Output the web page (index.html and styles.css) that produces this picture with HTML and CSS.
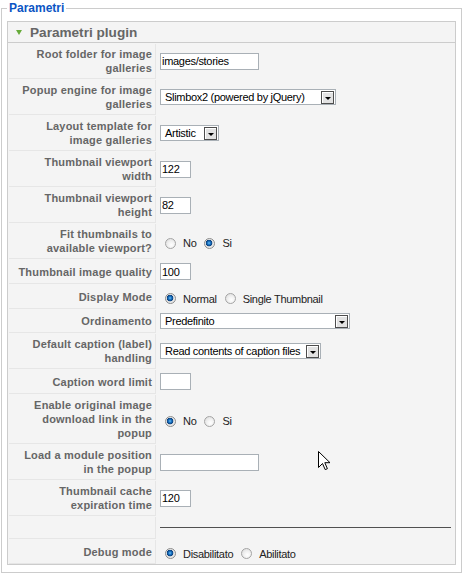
FILE: index.html
```html
<!DOCTYPE html>
<html lang="it">
<head>
<meta charset="utf-8">
<title>Parametri</title>
<link rel="stylesheet" href="styles.css">
</head>
<body>
<fieldset class="adminform">
  <legend>Parametri</legend>
  <div class="panel">
    <h3 class="panel-title"><span class="toggle"></span>Parametri plugin</h3>
    <table class="paramlist">
      <tr>
        <td class="key">Root folder for image<br>galleries</td>
        <td class="val"><input class="text w-wide" type="text" value="images/stories"></td>
      </tr>
      <tr>
        <td class="key">Popup engine for image<br>galleries</td>
        <td class="val"><span class="select w-slimbox"><span class="sel-text">Slimbox2 (powered by jQuery)</span><span class="sel-btn"></span></span></td>
      </tr>
      <tr>
        <td class="key">Layout template for<br>image galleries</td>
        <td class="val"><span class="select w-artistic"><span class="sel-text">Artistic</span><span class="sel-btn"></span></span></td>
      </tr>
      <tr>
        <td class="key">Thumbnail viewport<br>width</td>
        <td class="val"><input class="text w-small" type="text" value="122"></td>
      </tr>
      <tr>
        <td class="key">Thumbnail viewport<br>height</td>
        <td class="val"><input class="text w-small" type="text" value="82"></td>
      </tr>
      <tr>
        <td class="key">Fit thumbnails to<br>available viewport?</td>
        <td class="val">
          <div class="radios">
            <input class="radio" type="radio" name="fit"><span class="opt">No</span>
            <input class="radio" type="radio" name="fit" checked><span class="opt">Si</span>
          </div>
        </td>
      </tr>
      <tr>
        <td class="key">Thumbnail image quality</td>
        <td class="val"><input class="text w-small" type="text" value="100"></td>
      </tr>
      <tr>
        <td class="key">Display Mode</td>
        <td class="val">
          <div class="radios">
            <input class="radio" type="radio" name="mode" checked><span class="opt">Normal</span>
            <input class="radio" type="radio" name="mode"><span class="opt">Single Thumbnail</span>
          </div>
        </td>
      </tr>
      <tr>
        <td class="key">Ordinamento</td>
        <td class="val"><span class="select w-order"><span class="sel-text">Predefinito</span><span class="sel-btn"></span></span></td>
      </tr>
      <tr>
        <td class="key">Default caption (label)<br>handling</td>
        <td class="val"><span class="select w-caption"><span class="sel-text">Read contents of caption files</span><span class="sel-btn"></span></span></td>
      </tr>
      <tr>
        <td class="key">Caption word limit</td>
        <td class="val"><input class="text w-small" type="text" value=""></td>
      </tr>
      <tr>
        <td class="key">Enable original image<br>download link in the<br>popup</td>
        <td class="val">
          <div class="radios">
            <input class="radio" type="radio" name="dl" checked><span class="opt">No</span>
            <input class="radio" type="radio" name="dl"><span class="opt">Si</span>
          </div>
        </td>
      </tr>
      <tr>
        <td class="key">Load a module position<br>in the popup</td>
        <td class="val"><input class="text w-wide" type="text" value=""></td>
      </tr>
      <tr>
        <td class="key">Thumbnail cache<br>expiration time</td>
        <td class="val"><input class="text w-small" type="text" value="120"></td>
      </tr>
      <tr>
        <td class="key">&nbsp;</td>
        <td class="val"><hr class="sep"></td>
      </tr>
      <tr>
        <td class="key">Debug mode</td>
        <td class="val">
          <div class="radios">
            <input class="radio" type="radio" name="debug" checked><span class="opt">Disabilitato</span>
            <input class="radio" type="radio" name="debug"><span class="opt">Abilitato</span>
          </div>
        </td>
      </tr>
    </table>
  </div>
</fieldset>
<svg class="cursor" width="13" height="20" viewBox="0 0 13 20" aria-hidden="true">
  <path d="M0.5 0.5 L0.5 16.5 L4.5 12.5 L7.2 18.6 L9.4 17.7 L6.8 11.7 L12 11.7 Z" fill="#fff" stroke="#000" stroke-width="1" stroke-linejoin="miter"/>
</svg>
</body>
</html>
```

FILE: styles.css
```css
* {
  box-sizing: border-box;
}

html,
body {
  margin: 0;
  padding: 0;
  background: #fff;
}

body {
  position: relative;
  width: 467px;
  height: 579px;
  overflow: hidden;
  font-family: Arial, "Liberation Sans", Helvetica, sans-serif;
  font-size: 11px;
  color: #222;
}

.adminform {
  margin: 0 5px 0 1px;
  padding: 5px 5px 7px 5px;
  border: 1px solid #ccc;
  min-width: 0;
}

.adminform legend {
  padding: 0 2px;
  font-size: 12px;
  font-weight: bold;
  line-height: 16px;
  color: #0b55c4;
}

.panel {
  border: 1px solid #ccc;
  background: #f4f4f4;
}

.panel-title {
  display: flex;
  align-items: center;
  height: 21px;
  margin: 0;
  padding: 0 0 0 8px;
  border-bottom: 1px solid #ccc;
  background: #f4f4f4;
  font-size: 13.6px;
  font-weight: bold;
  color: #666;
}

.toggle {
  width: 0;
  height: 0;
  margin: 1px 8px 0 0;
  border-left: 3.5px solid transparent;
  border-right: 3.5px solid transparent;
  border-top: 5px solid #67ab3a;
}

.paramlist {
  width: 100%;
  margin-bottom: -1px;
  border-collapse: separate;
  border-spacing: 1px;
}

.paramlist td {
  padding: 3px;
  line-height: 14px;
  vertical-align: middle;
  border-bottom: 1px solid transparent;
}

.paramlist td.key {
  width: 147px;
  text-align: right;
  font-weight: bold;
  letter-spacing: 0.2px;
  color: #666;
  background: #f4f4f4;
  border-bottom: 1px solid #e6e6e6;
  border-right: 1px solid #e6e6e6;
}

.paramlist td.val {
  background: #f4f4f4;
  letter-spacing: -0.3px;
}

.text {
  display: block;
  height: 17px;
  margin: 0;
  padding: 0 1px;
  border: 1px solid #a9b0b6;
  background: #fff;
  font-family: Arial, "Liberation Sans", Helvetica, sans-serif;
  font-size: 11px;
  letter-spacing: -0.3px;
  color: #000;
  outline: none;
}

.w-wide {
  width: 99px;
}

.w-small {
  width: 31px;
}

.select {
  display: flex;
  align-items: center;
  height: 16px;
  padding: 0 1px;
  border: 1px solid #a9b0b6;
  background: #fff;
  color: #000;
}

.sel-text {
  flex: 1;
  padding-left: 3px;
  white-space: nowrap;
  overflow: hidden;
}

.sel-btn {
  display: flex;
  flex: none;
  align-items: flex-end;
  justify-content: center;
  width: 13px;
  height: 13px;
  padding-bottom: 3px;
  border: 1px solid #4d4d4d;
  background: #e2e2e2;
  box-shadow: inset 1px 1px 0 #fff;
}

.sel-btn::after {
  content: "";
  width: 0;
  height: 0;
  border-left: 3px solid transparent;
  border-right: 3px solid transparent;
  border-top: 3px solid #000;
}

.w-slimbox {
  width: 176px;
}

.w-artistic {
  width: 59px;
}

.w-order {
  width: 190px;
}

.w-caption {
  width: 161px;
}

.radios {
  display: flex;
  align-items: center;
  height: 17px;
  padding-top: 4px;
}

.radio {
  appearance: none;
  -webkit-appearance: none;
  flex: none;
  width: 11px;
  height: 11px;
  margin: 0 7px 0 5px;
  border: 1px solid #a4a4a4;
  border-radius: 50%;
  background: radial-gradient(circle at 60% 65%, #ffffff 0, #f2f2f2 40%, #d8d8d8 100%);
}

.radio:checked {
  border-color: #8c8c8c;
  background: radial-gradient(circle at 45% 45%, #6fc0f4 0, #1b76c6 1.5px, #0b3f7c 3px, #e4e4e4 3.6px, #f6f6f6 100%);
}

.opt {
  margin-right: 3px;
  color: #222;
}

.sep {
  height: 0;
  margin: 7px 0;
  border: 0;
  border-top: 1px solid #505050;
}

.cursor {
  position: absolute;
  left: 318px;
  top: 451px;
}
```
